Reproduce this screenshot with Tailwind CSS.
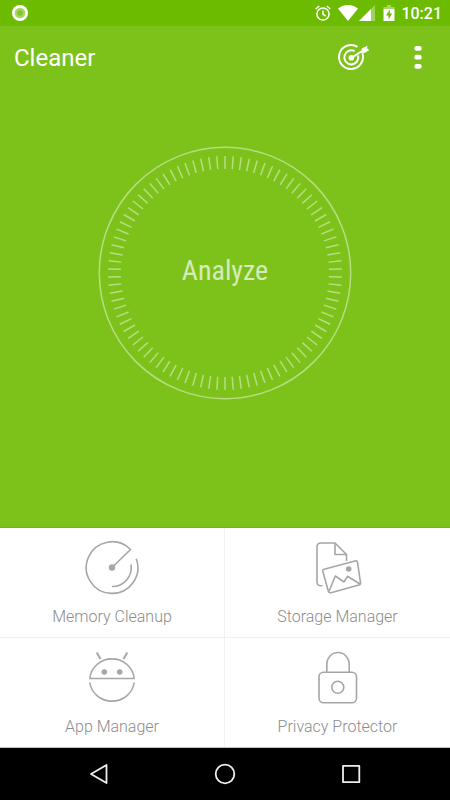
<!DOCTYPE html>
<html lang="en">
<head>
  <meta charset="UTF-8" />
  <meta name="viewport" content="width=device-width, initial-scale=1.0"/>
  <title>Cleaner</title>
  <script src="https://cdn.jsdelivr.net/npm/@tailwindcss/browser@4"></script>
</head>
<body class="min-h-screen flex flex-col bg-[#7dc21a] font-['Roboto',sans-serif]">

  <!-- Status bar -->
  <div class="h-[26px] bg-[#6cbb00] flex items-center justify-between pl-3 pr-2 text-white">
    <svg class="w-4 h-4" viewBox="0 0 16 16">
      <circle cx="8" cy="8" r="8" fill="#fff"/>
      <circle cx="8" cy="8" r="5.3" fill="#a5d65f"/>
      <circle cx="8" cy="8" r="2.8" fill="#83c52b"/>
    </svg>
    <div class="flex items-center">
      <svg class="w-4 h-4" viewBox="0 0 16 16" fill="none" stroke="#fff" stroke-width="1.5">
        <circle cx="8" cy="9" r="6.1"/>
        <path d="M8 5.5V9.4L10.8 11M.7 4L4.2 1M15.3 4L11.8 1"/>
      </svg>
      <svg class="w-5 h-4 ml-[7px]" viewBox="0 0 20 16"><path d="M0 3.4Q10-3.6 20 3.4L10 16z" fill="#fff"/></svg>
      <svg class="w-4 h-4 ml-px" viewBox="0 0 16 16">
        <path d="M0 16L16 0V16z" fill="#fff" opacity=".35"/>
        <path d="M0 16L12 4V16z" fill="#fff"/>
      </svg>
      <svg class="w-3 h-4 ml-2" viewBox="0 0 12 16">
        <path d="M.5 4V2H4V0H8V2H11.5V4z" fill="#fff" opacity=".4"/>
        <path d="M.5 4H11.5V16H.5z" fill="#fff"/>
        <path d="M7 4.5L3 10.5H5.5V14.5L9.2 8.5H6.7z" fill="#6cbb00"/>
      </svg>
      <span class="ml-[6px] pt-0.5 text-base leading-5 font-medium">10:21</span>
    </div>
  </div>

  <!-- App bar -->
  <header class="h-16 flex items-center justify-between pl-[14px] pr-4 text-white">
    <h1 class="text-2xl">Cleaner</h1>
    <div class="flex items-center gap-8">
      <button type="button" aria-label="Boost" class="w-8 h-8">
        <svg class="w-8 h-8" viewBox="0 -1 32 32" fill="none" stroke="#fff">
          <path d="M19.5 3.9A12 12 0 1 0 24.4 10.2" stroke-width="2"/>
          <path d="M16.6 8.2A7 7 0 1 0 20.1 12.6" stroke-width="2"/>
          <circle cx="13.3" cy="14.8" r="2.8" fill="#fff" stroke="none"/>
          <path d="M13.3 14.8L25 7.5" stroke-width="2"/>
          <path d="M22.5 8.5L24.5 5L29.5 2.8L29 5.3L31.3 7.3L27 9.8L23.5 10z" fill="#fff" stroke="none"/>
        </svg>
      </button>
      <button type="button" aria-label="More options" class="w-8 h-8 flex items-center justify-center">
        <svg class="w-2 h-6" viewBox="0 1 8 24" fill="#fff">
          <rect x=".3" y="1" width="7.4" height="4.8" rx="2.2"/>
          <rect x=".3" y="9.8" width="7.4" height="4.8" rx="2.2"/>
          <rect x=".3" y="19" width="7.4" height="4.8" rx="2.2"/>
        </svg>
      </button>
    </div>
  </header>

  <!-- Analyze dial -->
  <main class="flex-1 flex flex-col items-center pt-14 pb-24 border-b border-[#6cbb00]">
    <button type="button" class="grid place-items-center text-white/70">
      <svg class="col-start-1 row-start-1 w-[254px] h-[254px]" viewBox="-127 -127 254 254" fill="none" stroke="#fff" stroke-opacity=".45">
        <circle r="125.7" stroke-width="1.5"/>
        <g id="ticks" stroke-width="1.5"></g>
      </svg>
      <span class="col-start-1 row-start-1 pb-1 text-[28px] leading-10 font-['Roboto_Condensed','Liberation_Sans_Narrow','Roboto',sans-serif]">Analyze</span>
    </button>
  </main>

  <!-- Tools -->
  <nav class="grid grid-cols-2 bg-white border-b border-[#bdbdbd] text-base leading-5 font-light text-[#8c8c8c]">
    <a href="#memory" class="h-[110px] border-r border-b border-[#f0f0f0] flex flex-col items-center pt-3">
      <svg class="w-14 h-14 text-[#a6a6a6]" viewBox="0 0 56 56" fill="none" stroke="currentColor" stroke-width="1.6">
        <path d="M28 27.5L46.5 9.5A25.8 25.8 0 1 0 52.3 18.7"/>
        <path d="M47 24.5A19 19 0 0 1 28 46.5"/>
        <circle cx="28" cy="27.5" r="3.2" fill="currentColor" stroke="none"/>
      </svg>
      <span class="mt-[11px]">Memory Cleanup</span>
    </a>
    <a href="#storage" class="h-[110px] border-b border-[#f0f0f0] flex flex-col items-center pt-3">
      <svg class="w-14 h-14 text-[#a6a6a6]" viewBox="0 0 56 56" fill="none" stroke="currentColor" stroke-width="1.6" stroke-linejoin="round">
        <path d="M12.5 45.8H11Q7 45.8 7 41.8V7Q7 3 11 3H25L36.5 14.5V21"/>
        <path d="M25 3V14.5H36.5"/>
        <path d="M14.2 29.2L45 20.9Q47 20.4 47.5 22.4L50.5 42.5Q50.8 44.5 48.8 45L21 52.7Q19 53.2 18.3 51.3L12.8 31.3Q12.2 29.7 14.2 29.2z"/>
        <path d="M19 51.5L25.3 36L34 42L37.5 36.3L50 44"/>
        <circle cx="38.7" cy="29" r="2.8" fill="currentColor" stroke="none"/>
      </svg>
      <span class="mt-[11px]">Storage Manager</span>
    </a>
    <a href="#apps" class="h-[109px] border-r border-[#f0f0f0] flex flex-col items-center pt-3">
      <svg class="w-14 h-14 text-[#a6a6a6]" viewBox="0 0 56 56" fill="none" stroke="currentColor" stroke-width="1.6">
        <path d="M5.8 28.5A22.3 21.7 0 0 1 50.2 28.5z"/>
        <path d="M5.8 32.5A22.4 21.5 0 0 0 50.2 32.5"/>
        <path d="M12.8 2.5L16.5 9M43.2 2.5L39.5 9" stroke-width="2"/>
        <circle cx="20.3" cy="22" r="2.8" fill="currentColor" stroke="none"/>
        <circle cx="35.7" cy="22" r="2.8" fill="currentColor" stroke="none"/>
      </svg>
      <span class="mt-[11px]">App Manager</span>
    </a>
    <a href="#privacy" class="h-[109px] flex flex-col items-center pt-3">
      <svg class="w-14 h-14 text-[#a6a6a6]" viewBox="0 0 56 56" fill="none" stroke="currentColor" stroke-width="1.6">
        <path d="M16.8 22V14.5A11.2 12 0 0 1 39.2 14.5V22"/>
        <rect x="9" y="22.2" width="37.5" height="30.5" rx="4.5"/>
        <circle cx="27.8" cy="37.3" r="6"/>
      </svg>
      <span class="mt-[11px]">Privacy Protector</span>
    </a>
  </nav>

  <!-- Android navigation bar -->
  <footer class="h-[52px] bg-black flex items-center justify-between px-[87px]">
    <button type="button" aria-label="Back">
      <svg class="w-6 h-6" viewBox="0 0 24 24" fill="none" stroke="#eee" stroke-width="1.8" stroke-linejoin="round"><path d="M4 12L19.5 3V21z"/></svg>
    </button>
    <button type="button" aria-label="Home">
      <svg class="w-6 h-6" viewBox="0 0 24 24" fill="none" stroke="#eee" stroke-width="1.8"><circle cx="12" cy="12" r="9.3"/></svg>
    </button>
    <button type="button" aria-label="Recent apps">
      <svg class="w-6 h-6" viewBox="0 0 24 24" fill="none" stroke="#eee" stroke-width="1.8" stroke-linejoin="round"><rect x="4" y="3.9" width="16.3" height="16.3"/></svg>
    </button>
  </footer>

  <script>
    const ticks = document.getElementById('ticks');
    for (let i = 0; i < 90; i++) {
      const line = document.createElementNS('http://www.w3.org/2000/svg', 'line');
      line.setAttribute('y1', -117);
      line.setAttribute('y2', -104);
      line.setAttribute('transform', `rotate(${i * 4})`);
      ticks.appendChild(line);
    }
  </script>

</body>
</html>
